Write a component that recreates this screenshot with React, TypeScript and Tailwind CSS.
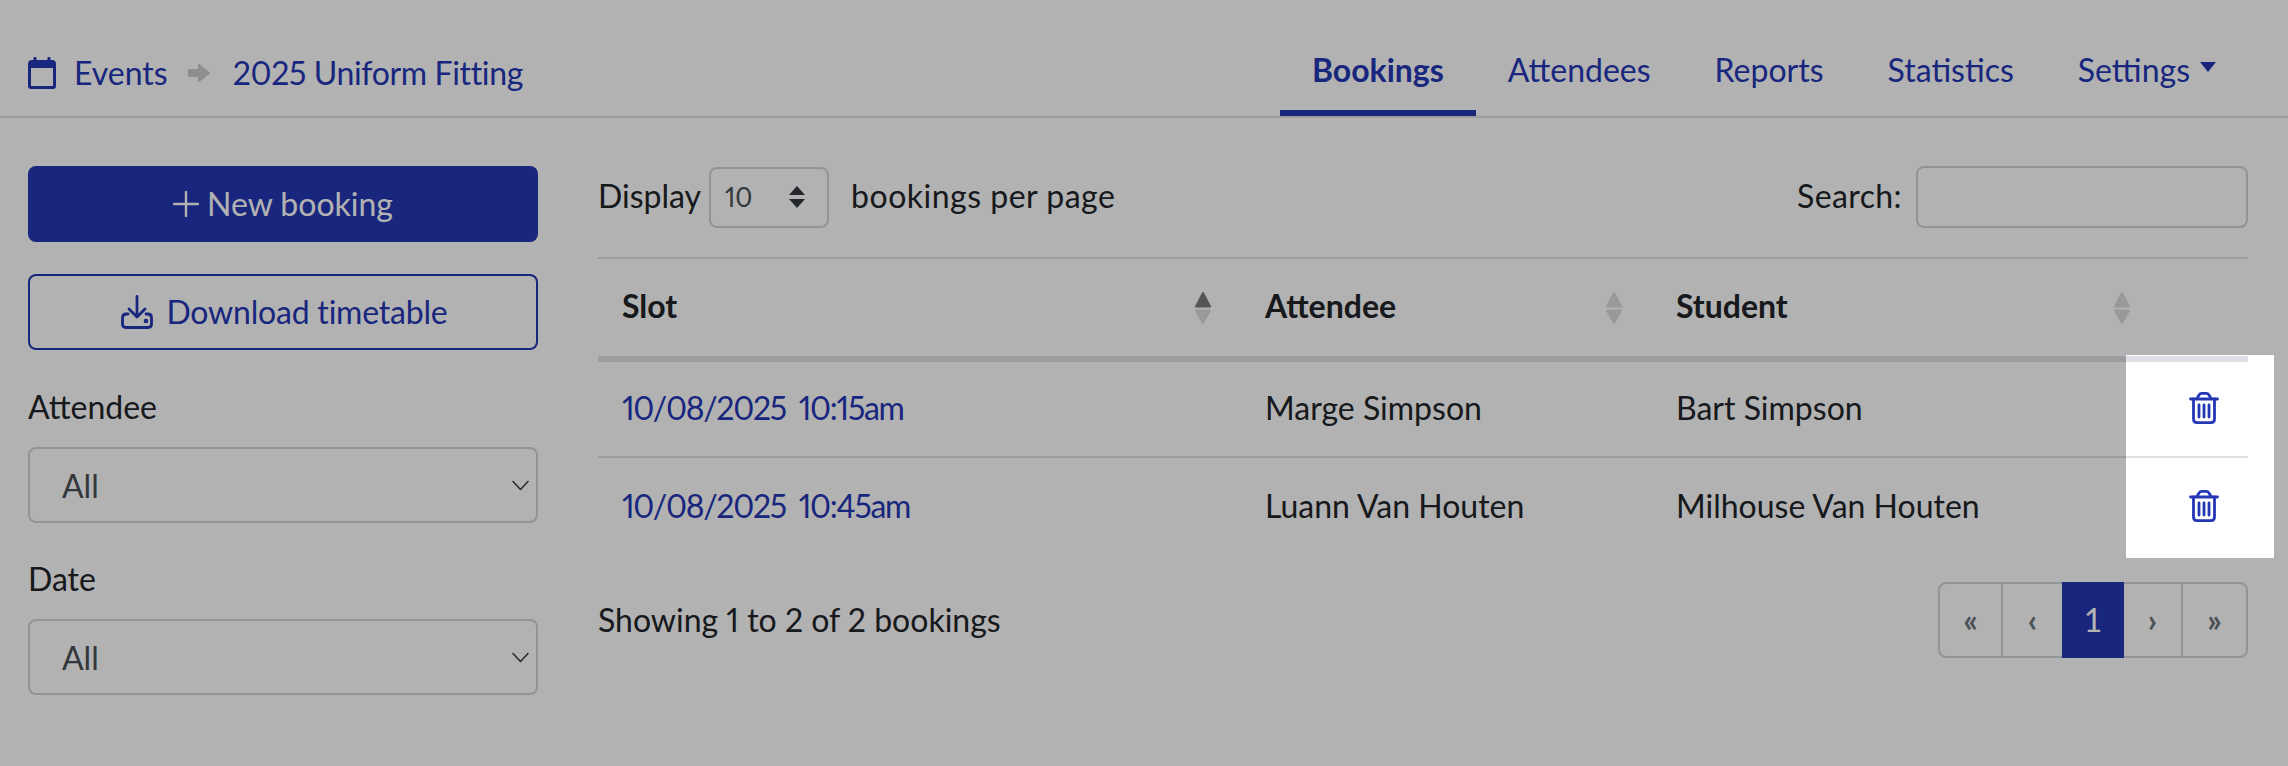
import React from 'react';

const FONT = "font-['Lato','Liberation_Sans',sans-serif]";

const SortIcon: React.FC<{ active?: boolean }> = ({ active }) => (
  <svg width="16" height="34" viewBox="0 0 16 34" className="shrink-0" strokeWidth="2" strokeLinejoin="round">
    <path d="M8 2 L15 15.5 H1 Z" fill={active ? '#7a7a7a' : '#dcdcdc'} stroke={active ? '#7a7a7a' : '#dcdcdc'} />
    <path d="M8 32 L15 19.5 H1 Z" fill="#dcdcdc" stroke="#dcdcdc" />
  </svg>
);

const TrashIcon: React.FC = () => (
  <svg width="30" height="32" viewBox="0 0 30 32" fill="none" stroke="#2537b5" strokeWidth="2.8" strokeLinecap="round">
    <path d="M1.5 7 H28.5" />
    <path d="M8 6.5 L10 3 Q11 1.4 12.5 1.4 H17.5 Q19 1.4 20 3 L22 6.5" />
    <path d="M4.5 7 V27 Q4.5 30.6 8 30.6 H22 Q25.5 30.6 25.5 27 V7" />
    <path d="M10 13 V25 M15 13 V25 M20 13 V25" />
  </svg>
);

const CalendarIcon: React.FC = () => (
  <svg width="28" height="32" viewBox="0 0 28 32" fill="#2537b5">
    <rect x="5.5" y="0" width="3" height="6" rx="1.2" />
    <rect x="19.5" y="0" width="3" height="6" rx="1.2" />
    <path fillRule="evenodd" d="M4 3 H24 Q28 3 28 7 V29 Q28 32 25 32 H3 Q0 32 0 29 V7 Q0 3 4 3 Z M3 11 V29 H25 V11 Z" />
  </svg>
);

const DownloadIcon: React.FC = () => (
  <svg width="32" height="34" viewBox="0 0 32 34" fill="none" stroke="#2537b5" strokeWidth="2.8" strokeLinecap="round" strokeLinejoin="round">
    <path d="M16 1.5 V22 M8 14 L16 22 L24 14" />
    <path d="M7 19 H5 Q1.5 19 1.5 23 V29 Q1.5 32.5 5 32.5 H27 Q30.5 32.5 30.5 29 V23 Q30.5 19 27 19 H25" />
    <circle cx="25" cy="26" r="0.9" fill="#2537b5" />
  </svg>
);

const Chevron: React.FC = () => (
  <svg width="17" height="11" viewBox="0 0 17 11" fill="none" stroke="#343a40" strokeWidth="1.5" strokeLinecap="round" strokeLinejoin="round">
    <path d="M1 1.5 L8.5 9.5 L16 1.5" />
  </svg>
);

const FilterSelect: React.FC<{ label: string }> = ({ label }) => (
  <div className="flex flex-col">
    <label className="text-[32px] leading-[43px] text-[#212529] mb-[19px]">{label}</label>
    <div className="h-[76px] rounded-[8px] border-2 border-[#ced4da] flex items-center justify-between pl-[32px] pr-[7px]">
      <span className="text-[32px] text-[#495057] pt-[2px]">All</span>
      <Chevron />
    </div>
  </div>
);

const rows = [
  { slot: '10/08/2025 10:15am', attendee: 'Marge Simpson', student: 'Bart Simpson' },
  { slot: '10/08/2025 10:45am', attendee: 'Luann Van Houten', student: 'Milhouse Van Houten' },
];

const tabs = ['Bookings', 'Attendees', 'Reports', 'Statistics', 'Settings'];

const pages = [
  { label: '«', w: 'w-[63px]' },
  { label: '‹', w: 'w-[59px]' },
  { label: '1', w: 'w-[62px]', active: true },
  { label: '›', w: 'w-[59px]' },
  { label: '»', w: 'w-[63px]' },
];

export default function App() {
  return (
    <div className={`relative w-[2288px] h-[766px] overflow-hidden bg-white ${FONT}`}>
      {/* Header */}
      <div className="h-[118px] border-b-2 border-[#dee2e6] flex items-end justify-between pl-[28px] pr-[40px]">
        <div className="flex items-center h-[32px] mb-[27px] text-[32px] text-[#2537b5]">
          <CalendarIcon />
          <span className="ml-[18px]">Events</span>
          <svg width="22" height="20" viewBox="0 0 22 20" className="ml-[20px] mr-[23px]" fill="#cccccc" stroke="#cccccc" strokeWidth="2" strokeLinejoin="round">
            <path d="M1 7 H11 V2 L21 10 L11 18 V13 H1 Z" />
          </svg>
          <span className="proportional-nums tracking-[-0.35px]">2025 Uniform Fitting</span>
        </div>
        <nav className="flex text-[32px] text-[#2537b5]">
          {tabs.map((t, i) => (
            <div
              key={t}
              className={`h-[80px] px-[32px] pb-[6px] flex items-center border-b-[6px] ${i === 0 ? 'border-[#2537b5] font-bold' : 'border-transparent'}`}
            >
              {t}
              {t === 'Settings' && <span className="ml-[10px] mb-[6px] w-0 h-0 border-x-[8px] border-x-transparent border-t-[10px] border-t-[#2537b5]" />}
            </div>
          ))}
        </nav>
      </div>

      <div className="flex pl-[28px] pr-[40px] pt-[48px] gap-[60px]">
        {/* Sidebar */}
        <aside className="w-[510px] shrink-0 flex flex-col">
          <button className="h-[76px] rounded-[8px] bg-[#2537b5] text-white text-[32px] flex items-center justify-center gap-[8px]">
            <svg width="26" height="26" viewBox="0 0 26 26" stroke="white" strokeWidth="2.4" strokeLinecap="round">
              <path d="M13 1 V25 M1 13 H25" />
            </svg>
            New booking
          </button>
          <button className="mt-[32px] h-[76px] rounded-[8px] border-2 border-[#2537b5] text-[#2537b5] text-[32px] tracking-[-0.2px] flex items-center justify-center gap-[13px] pl-[3px]">
            <DownloadIcon />
            Download timetable
          </button>
          <div className="mt-[35px] flex flex-col gap-[33px]">
            <FilterSelect label="Attendee" />
            <div className="pt-[1px]">
              <FilterSelect label="Date" />
            </div>
          </div>
        </aside>

        {/* Main */}
        <main className="flex-1 min-w-0">
          <div className="flex items-center justify-between h-[62px] text-[32px] text-[#212529]">
            <div className="flex items-center">
              <span className="pb-[3px]">Display</span>
              <div className="ml-[8px] w-[120px] h-[61px] rounded-[8px] border-2 border-[#ced4da] flex items-center justify-between pl-[14px] pr-[22px]">
                <span className="text-[26px] text-[#495057] proportional-nums">10</span>
                <svg width="16" height="22" viewBox="0 0 16 22" fill="#343a40">
                  <path d="M8 0 L16 9 H0 Z M8 22 L16 13 H0 Z" />
                </svg>
              </div>
              <span className="ml-[22px] pb-[3px] tracking-[0.5px]">bookings per page</span>
            </div>
            <div className="flex items-center gap-[14px]">
              <span className="pb-[3px] tracking-[0.4px]">Search:</span>
              <div className="w-[332px] h-[62px] rounded-[8px] border-2 border-[#ced4da]" />
            </div>
          </div>

          <table className="mt-[29px] w-[1650px] table-fixed border-t-2 border-[#dee2e6] text-[32px] text-[#212529]">
            <colgroup>
              <col className="w-[643px]" />
              <col className="w-[411px]" />
              <col className="w-[508px]" />
              <col className="w-[88px]" />
            </colgroup>
            <thead>
              <tr className="h-[101px] border-b-[6px] border-[#dee2e6]">
                {['Slot', 'Attendee', 'Student'].map((h, i) => (
                  <th key={h} className="pl-[24px] pr-[30px] font-bold text-left">
                    <div className="flex items-center justify-between">
                      <span className="-mt-[4px]">{h}</span>
                      <SortIcon active={i === 0} />
                    </div>
                  </th>
                ))}
                <th />
              </tr>
            </thead>
            <tbody>
              {rows.map((r, i) => (
                <tr key={r.slot} className={`h-[98px] ${i === 0 ? 'border-b-2 border-[#dee2e6]' : ''}`}>
                  <td className="pl-[24px] pb-[2px] text-[#2537b5] proportional-nums tracking-[-1.3px] [word-spacing:6px]">{r.slot}</td>
                  <td className="pl-[24px] pb-[2px]">{r.attendee}</td>
                  <td className="pl-[24px] pb-[2px]">{r.student}</td>
                  <td className="pb-[2px]">
                    <div className="flex justify-center pr-[1px]">
                      <TrashIcon />
                    </div>
                  </td>
                </tr>
              ))}
            </tbody>
          </table>

          <div className="mt-[27px] flex items-center justify-between text-[32px] text-[#212529]">
            <span className="proportional-nums">Showing 1 to 2 of 2 bookings</span>
            <div className="flex h-[76px] rounded-[8px] border-2 border-[#ced4da] text-[#6c757d] font-bold">
              {pages.map((p, i) => (
                <div
                  key={i}
                  className={`${p.w} -my-[2px] flex items-center justify-center ${p.active ? 'bg-[#2537b5] text-white font-normal' : ''} ${i === 0 || i === 3 ? 'border-r-2 border-[#ced4da]' : ''}`}
                >
                  {p.label}
                </div>
              ))}
            </div>
          </div>
        </main>
      </div>

      {/* Tour spotlight: everything but this box is dimmed */}
      <div className="absolute left-[2126px] top-[355px] w-[148px] h-[203px] shadow-[0_0_0_2400px_rgba(0,0,0,0.3)]" />
    </div>
  );
}
